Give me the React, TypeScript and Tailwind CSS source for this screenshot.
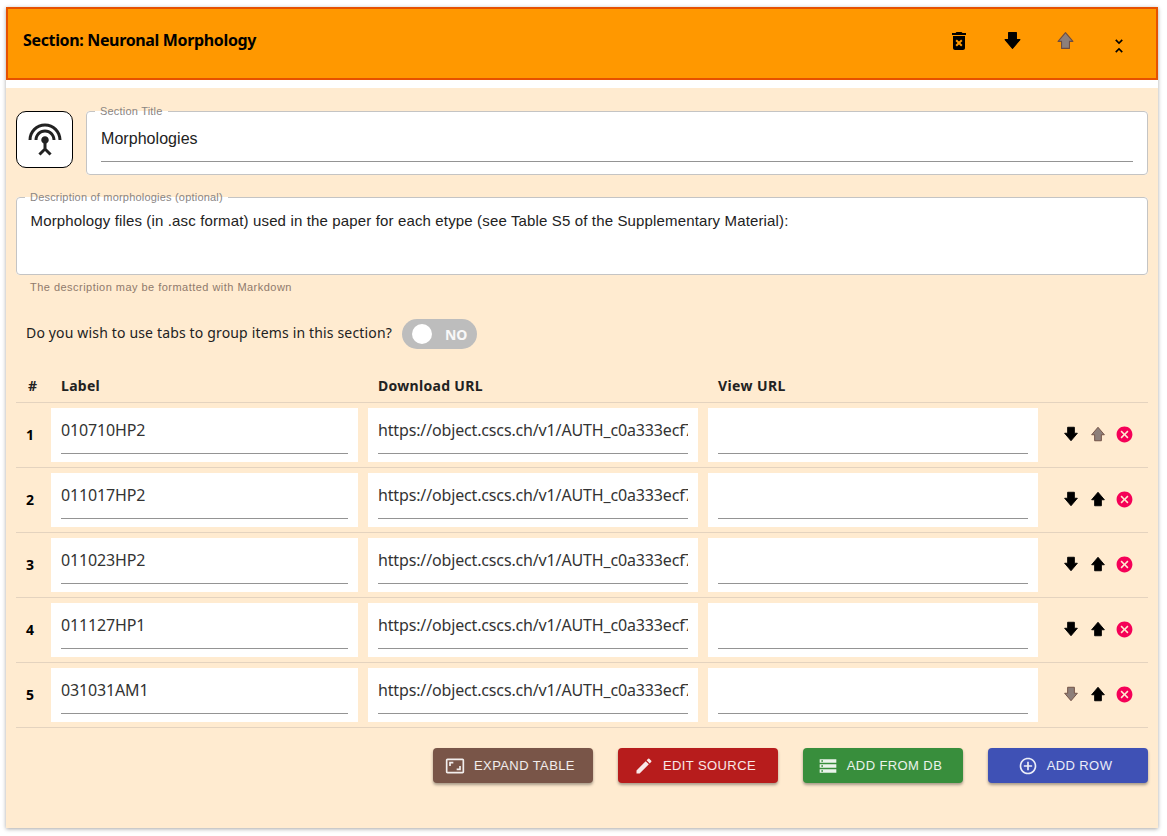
import React from "react";

const SANS = "font-['Liberation_Sans',Arial,sans-serif]";
const UI = "font-['Noto_Sans','Open_Sans',sans-serif]";

const URL_VALUE =
  "https://object.cscs.ch/v1/AUTH_c0a333ecf7c147a8b1f8f9a2c5e0d3b4/hippocampus_morphologies/010710HP2.asc";

const rows = [
  { label: "010710HP2", upOff: true, downOff: false },
  { label: "011017HP2", upOff: false, downOff: false },
  { label: "011023HP2", upOff: false, downOff: false },
  { label: "011127HP1", upOff: false, downOff: false },
  { label: "031031AM1", upOff: false, downOff: true },
];

function Icon({ d, size, className }: { d: string; size: number; className?: string }) {
  return (
    <svg viewBox="0 0 24 24" width={size} height={size} className={className} fill="currentColor">
      <path d={d} />
    </svg>
  );
}

const ICONS = {
  trash:
    "M6 19c0 1.1.9 2 2 2h8c1.1 0 2-.9 2-2V7H6v12zm2.46-7.12 1.41-1.41L12 12.59l2.12-2.12 1.41 1.41L13.41 14l2.12 2.12-1.41 1.41L12 15.41l-2.12 2.12-1.41-1.41L10.59 14l-2.13-2.12zM15.5 4l-1-1h-5l-1 1H5v2h14V4z",
  unfold:
    "M7.41 18.59 8.83 20 12 16.83 15.17 20l1.41-1.41L12 14l-4.59 4.59zm9.18-13.18L15.17 4 12 7.17 8.83 4 7.41 5.41 12 10l4.59-4.59z",
  antenna:
    "M12 5c-3.87 0-7 3.13-7 7h2c0-2.76 2.24-5 5-5s5 2.24 5 5h2c0-3.87-3.13-7-7-7zm1 9.29c.88-.39 1.5-1.26 1.5-2.29 0-1.38-1.12-2.5-2.5-2.5S9.5 10.62 9.5 12c0 1.02.62 1.9 1.5 2.29v3.3L7.59 21 9 22.41l3-3 3 3L16.41 21 13 17.59v-3.3zM12 1C5.93 1 1 5.93 1 12h2c0-4.97 4.03-9 9-9s9 4.03 9 9h2c0-6.07-4.93-11-11-11z",
  cancel:
    "M12 2C6.47 2 2 6.47 2 12s4.47 10 10 10 10-4.47 10-10S17.53 2 12 2zm5 13.59L15.59 17 12 13.41 8.41 17 7 15.59 10.59 12 7 8.41 8.41 7 12 10.59 15.59 7 17 8.41 13.41 12 17 15.59z",
  expand:
    "M19 12h-2v3h-3v2h5v-5zM7 9h3V7H5v5h2V9zm14-6H3c-1.1 0-2 .9-2 2v14c0 1.1.9 2 2 2h18c1.1 0 2-.9 2-2V5c0-1.1-.9-2-2-2zm0 16.01H3V4.99h18v14.02z",
  edit:
    "M3 17.25V21h3.75L17.81 9.94l-3.75-3.75L3 17.25zM20.71 7.04c.39-.39.39-1.02 0-1.41l-2.34-2.34a.9959.9959 0 0 0-1.41 0l-1.83 1.83 3.75 3.75 1.83-1.83z",
  storage:
    "M2 20h20v-4H2v4zm2-3h2v2H4v-2zM2 4v4h20V4H2zm4 3H4V5h2v2zm-4 7h20v-4H2v4zm2-3h2v2H4v-2z",
  add:
    "M13 7h-2v4H7v2h4v4h2v-4h4v-2h-4V7zm-1-5C6.48 2 2 6.48 2 12s4.48 10 10 10 10-4.48 10-10S17.52 2 12 2zm0 18c-4.41 0-8-3.59-8-8s3.59-8 8-8 8 3.59 8 8-3.59 8-8 8z",
};

function Arrow({ dir, off, size }: { dir: "up" | "down"; off?: boolean; size: number }) {
  return (
    <svg
      viewBox="0 0 24 24"
      width={size}
      height={size}
      className={dir === "up" ? "rotate-180" : ""}
      fill={off ? "#8d7f7a" : "#000"}
      stroke={off ? "#6d4c41" : "#000"}
      strokeWidth={1.2}
      strokeLinejoin="round"
    >
      <path d="M7.5 3h9v8h4L12 21 3.5 11h4z" />
    </svg>
  );
}

function Field({ label, className, children }: { label: string; className: string; children: React.ReactNode }) {
  return (
    <fieldset className={`bg-white border border-[#c4c4c4] rounded-[4px] ${className}`}>
      <legend className={`-ml-[6px] px-[5px] text-[11px] leading-[12px] tracking-[0.2px] text-[#8a8583] ${SANS}`}>{label}</legend>
      {children}
    </fieldset>
  );
}

function Cell({ value }: { value: string }) {
  return (
    <div className="bg-white h-[54px] px-[10px] pt-[10px]">
      <input
        readOnly
        value={value}
        className={`w-full h-[36px] pb-[11px] border-b border-[#949494] bg-transparent outline-none text-[16px] tracking-[-0.15px] text-[#333] ${UI}`}
      />
    </div>
  );
}

function ActionButton({ icon, text, color, size }: { icon: string; text: string; color: string; size: number }) {
  return (
    <button
      className={`w-[160px] h-[35px] pr-[6px] rounded-[4px] flex items-center justify-center gap-[9px] text-white/90 text-[13px] tracking-[0.4px] uppercase shadow-[0_2px_3px_rgba(0,0,0,0.35)] ${color} ${SANS}`}
    >
      <Icon d={icon} size={size} />
      {text}
    </button>
  );
}

export default function App() {
  return (
    <div className="bg-white min-h-[836px] pt-[7px] px-[6px] w-[1164px]">
      <div className="w-[1152px] shadow-[0_1px_4px_rgba(0,0,0,0.35)] bg-white">
        <div className="h-[73px] bg-[#ff9800] border-2 border-[#e65100] flex items-center pl-[15px]">
          <h2 className={`text-[16px] font-bold text-black tracking-[-0.35px] -mt-[7px] ${UI}`}>Section: Neuronal Morphology</h2>
          <div className="ml-auto flex items-center -mt-[6px]">
            <div className="w-[53px] flex justify-center"><Icon d={ICONS.trash} size={24} className="text-black" /></div>
            <div className="w-[54px] flex justify-center"><Arrow dir="down" size={21} /></div>
            <div className="w-[52px] flex justify-center"><Arrow dir="up" off size={21} /></div>
            <div className="w-[55px] flex justify-center mt-[10px]"><Icon d={ICONS.unfold} size={20} className="text-black" /></div>
            <div className="w-[10px]" />
          </div>
        </div>

        <div className="mt-[8px] bg-[#ffebd0] h-[740px] px-[10px] pt-[17px]">
          <div className="flex gap-[13px] items-start">
            <div className="mt-[6px] w-[57px] h-[57px] shrink-0 bg-white border border-black rounded-[10px] flex items-center justify-center">
              <Icon d={ICONS.antenna} size={36} className="text-[#222]" />
            </div>
            <Field label="Section Title" className="flex-1 h-[70px] px-[14px]">
              <input
                readOnly
                value="Morphologies"
                className={`w-full h-[45px] border-b border-[#949494] outline-none text-[16px] tracking-[0.05px] text-[#222] ${SANS}`}
              />
            </Field>
          </div>

          <Field label="Description of morphologies (optional)" className="mt-[16px] h-[84px] px-[14px]">
            <div className={`pt-[7px] -ml-[0.5px] text-[15px] tracking-[0.145px] text-[#222] ${SANS}`}>
              Morphology files (in .asc format) used in the paper for each etype (see Table S5 of the Supplementary Material):
            </div>
          </Field>
          <div className={`mt-[6px] pl-[14px] text-[11px] leading-[13px] tracking-[0.47px] text-[#8f7a6c] ${SANS}`}>
            The description may be formatted with Markdown
          </div>

          <div className="mt-[25px] pl-[10px] flex items-center gap-[10px] h-[30px]">
            <span className={`text-[14px] tracking-[0.16px] text-[#222] -mt-[3px] ${UI}`}>Do you wish to use tabs to group items in this section?</span>
            <div className="w-[75px] h-[30px] rounded-full bg-[#bdbdbd] flex items-center pl-[10px]">
              <span className="w-[20px] h-[20px] rounded-full bg-white" />
              <span className={`ml-[13px] text-[14px] font-bold text-white/90 leading-none mt-[2px] ${UI}`}>NO</span>
            </div>
          </div>

          <div className="mt-[19px] grid grid-cols-[35px_317px_340px_340px_100px] border-b border-[#e4d3bf] h-[35px] items-center">
            <div className={`text-[14px] font-bold text-[#222] pl-[12px] ${UI}`}>#</div>
            <div className={`text-[14px] font-bold tracking-[0.3px] text-[#222] pl-[10px] ${UI}`}>Label</div>
            <div className={`text-[14px] font-bold tracking-[0.3px] text-[#222] pl-[10px] ${UI}`}>Download URL</div>
            <div className={`text-[14px] font-bold tracking-[0.4px] text-[#222] pl-[10px] ${UI}`}>View URL</div>
            <div />
          </div>

          {rows.map((row, i) => (
            <div key={row.label} className="h-[65px] border-b border-[#e4d3bf] grid grid-cols-[25px_307px_330px_330px_100px] gap-x-[10px] items-center">
              <div className={`text-[14px] font-bold text-black pl-[10px] -mt-[2px] ${UI}`}>{i + 1}</div>
              <Cell value={row.label} />
              <Cell value={URL_VALUE} />
              <Cell value="" />
              <div className="flex items-center pl-[9px] -mt-[2px]">
                <div className="w-[27px] flex justify-center"><Arrow dir="down" off={row.downOff} size={18} /></div>
                <div className="w-[27px] flex justify-center"><Arrow dir="up" off={row.upOff} size={18} /></div>
                <div className="w-[27px] flex justify-center"><Icon d={ICONS.cancel} size={19} className="text-[#f50057]" /></div>
              </div>
            </div>
          ))}

          <div className="mt-[20px] flex justify-end gap-[25px]">
            <ActionButton icon={ICONS.expand} text="Expand table" color="bg-[#795548]" size={20} />
            <ActionButton icon={ICONS.edit} text="Edit source" color="bg-[#b71c1c]" size={20} />
            <ActionButton icon={ICONS.storage} text="Add from DB" color="bg-[#388e3c]" size={20} />
            <ActionButton icon={ICONS.add} text="Add row" color="bg-[#3f51b5]" size={20} />
          </div>
        </div>
      </div>
    </div>
  );
}
